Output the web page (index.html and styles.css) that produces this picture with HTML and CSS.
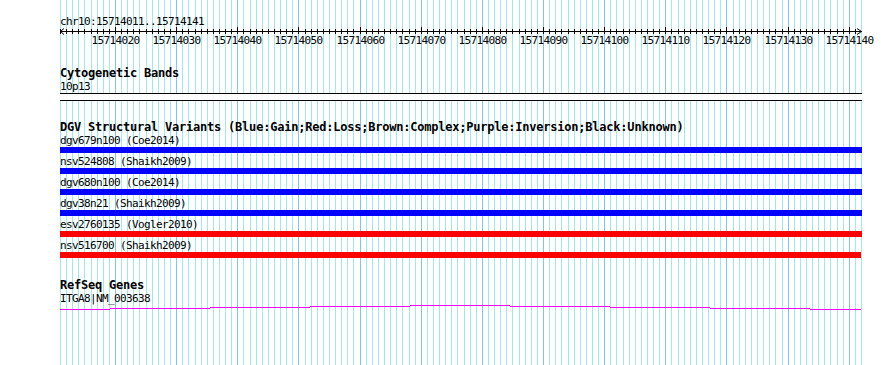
FILE: index.html
```html
<!DOCTYPE html>
<html lang="en">
<head>
    <meta charset="UTF-8">
    <title>chr10:15714011..15714141</title>
    <link rel="stylesheet" href="styles.css">
</head>
<body>

<div class="panel">
    <svg class="grid" id="grid" width="890" height="365"></svg>

    <div class="tracks">
        <div class="locus">chr10:15714011..15714141</div>
        <svg class="ruler" id="ruler" width="802" height="22">
            <rect x="0" y="4" width="802" height="1"></rect>
            <polyline class="arrow" points="4,1.5 0.5,4.5 4,7.5"></polyline>
            <polyline class="arrow" points="797,1.5 801.5,4.5 797,7.5"></polyline>
            <g class="ticks" id="ticks"></g>
            <text x="55.5" y="17">15714020</text>
            <text x="116.5" y="17">15714030</text>
            <text x="177.5" y="17">15714040</text>
            <text x="238.5" y="17">15714050</text>
            <text x="300.5" y="17">15714060</text>
            <text x="361.5" y="17">15714070</text>
            <text x="422.5" y="17">15714080</text>
            <text x="483.5" y="17">15714090</text>
            <text x="544.5" y="17">15714100</text>
            <text x="605.5" y="17">15714110</text>
            <text x="666.5" y="17">15714120</text>
            <text x="728.5" y="17">15714130</text>
            <text x="789.5" y="17">15714140</text>
        </svg>

        <div class="track cyto">
            <div class="track-title">Cytogenetic Bands</div>
            <div class="name">10p13</div>
            <div class="cyto-box"></div>
        </div>

        <div class="track dgv">
            <div class="track-title">DGV Structural Variants (Blue:Gain;Red:Loss;Brown:Complex;Purple:Inversion;Black:Unknown)</div>
            <div class="variant">
                <div class="name">dgv679n100 (Coe2014)</div>
                <div class="bar gain"></div>
            </div>
            <div class="variant">
                <div class="name">nsv524808 (Shaikh2009)</div>
                <div class="bar gain"></div>
            </div>
            <div class="variant">
                <div class="name">dgv680n100 (Coe2014)</div>
                <div class="bar gain"></div>
            </div>
            <div class="variant">
                <div class="name">dgv38n21 (Shaikh2009)</div>
                <div class="bar gain"></div>
            </div>
            <div class="variant">
                <div class="name">esv2760135 (Vogler2010)</div>
                <div class="bar loss"></div>
            </div>
            <div class="variant">
                <div class="name">nsv516700 (Shaikh2009)</div>
                <div class="bar loss short"></div>
            </div>
        </div>

        <div class="track genes">
            <div class="track-title">RefSeq Genes</div>
            <div class="name">ITGA8|NM_003638</div>
            <svg class="gene" width="802" height="6">
                <rect x="0" y="4" width="50" height="1"></rect>
                <rect x="50" y="3" width="100" height="1"></rect>
                <rect x="150" y="2" width="100" height="1"></rect>
                <rect x="250" y="1" width="100" height="1"></rect>
                <rect x="350" y="0" width="100" height="1"></rect>
                <rect x="450" y="1" width="100" height="1"></rect>
                <rect x="550" y="2" width="100" height="1"></rect>
                <rect x="650" y="3" width="100" height="1"></rect>
                <rect x="750" y="4" width="51" height="1"></rect>
            </svg>
        </div>
    </div>
</div>

<script>
    // one grid line and one ruler tick per base, a darker line every 10 bases
    var ns = "http://www.w3.org/2000/svg";
    var grid = document.getElementById("grid");
    var ticks = document.getElementById("ticks");
    var start = 15714011;
    var bases = 131;

    for (var i = 0; i <= bases; i++) {
        var x = Math.round(60 + i * 801 / bases);
        var major = (start + i) % 10 === 0;

        var line = document.createElementNS(ns, "rect");
        line.setAttribute("x", x);
        line.setAttribute("y", 0);
        line.setAttribute("width", 1);
        line.setAttribute("height", 365);
        line.setAttribute("class", major ? "major" : "minor");
        grid.appendChild(line);

        if (i < bases) {
            var tick = document.createElementNS(ns, "rect");
            tick.setAttribute("x", x - 60);
            tick.setAttribute("y", major ? 0 : 2);
            tick.setAttribute("width", 1);
            tick.setAttribute("height", major ? 7 : 5);
            ticks.appendChild(tick);
        }
    }
</script>

</body>
</html>
```

FILE: styles.css
```css
body {
    margin: 0;
    background-color: #fff;
}
.panel {
    position: relative;
    width: 890px;
    height: 365px;
    overflow: hidden;
    font-family: "DejaVu Sans Mono", monospace;
    color: #000;
}
.grid {
    position: absolute;
    top: 0;
    left: 0;
}
.grid .minor {
    fill: #a4e6ec;
}
.grid .major {
    fill: #84c4ec;
}
.tracks {
    position: relative;
    width: 802px;
    padding: 16px 0 0 60px;
}
.locus, .name {
    font-size: 11px;
    letter-spacing: -0.62px;
    line-height: 13px;
    white-space: nowrap;
}
.locus {
    height: 11px;
    line-height: 11px;
}
.ruler {
    display: block;
    overflow: visible;
}
.ruler rect {
    fill: #000;
}
.ruler .arrow {
    fill: none;
    stroke: #000;
    stroke-width: 1;
}
.ruler text {
    font-family: "DejaVu Sans Mono", monospace;
    font-size: 11px;
    letter-spacing: -0.62px;
    text-anchor: middle;
    fill: #000;
}
.track-title {
    font-size: 12px;
    font-weight: bold;
    letter-spacing: -0.22px;
    line-height: 13px;
    white-space: nowrap;
}
.cyto {
    margin-top: 18px;
}
.cyto-box {
    height: 6px;
    background-color: #fff;
    border-top: 1px solid #000;
    border-bottom: 1px solid #000;
}
.dgv {
    margin-top: 20px;
}
.variant + .variant {
    margin-top: 2px;
}
.bar {
    height: 6px;
}
.bar.gain {
    background-color: #00f;
}
.bar.loss {
    background-color: #f00;
}
.bar.short {
    width: 801px;
}
.genes {
    margin-top: 21px;
}
.gene {
    display: block;
}
.gene rect {
    fill: #f0f;
}
```
